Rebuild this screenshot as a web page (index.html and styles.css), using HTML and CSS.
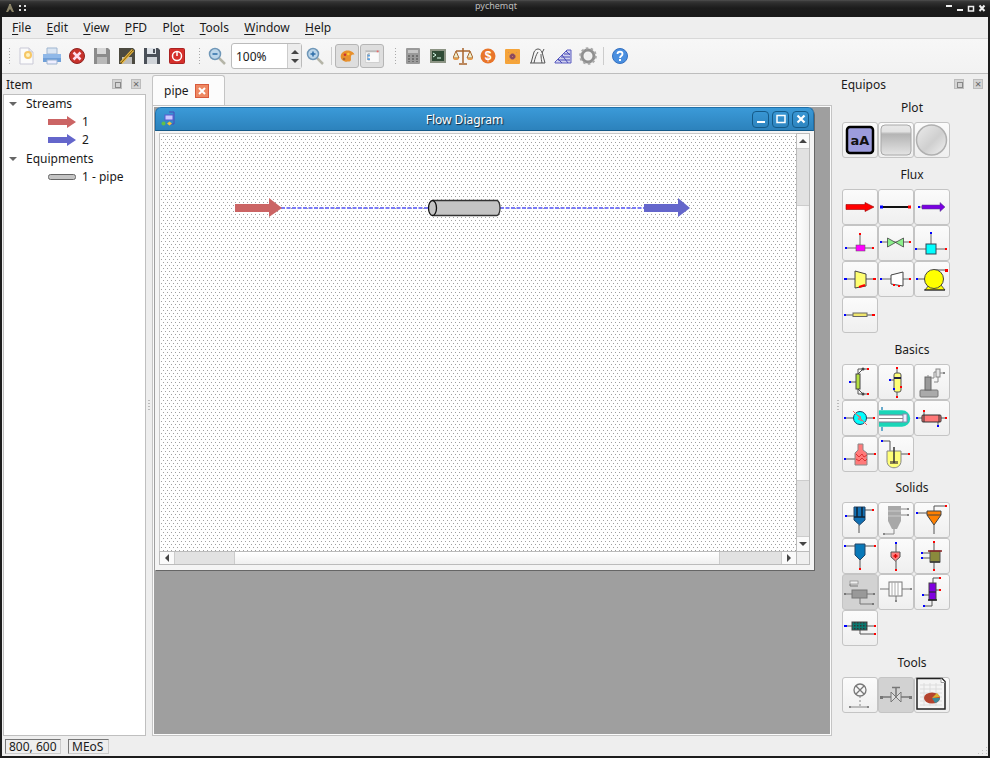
FILE: index.html
```html
<!DOCTYPE html>
<html lang="en">
<head>
<meta charset="utf-8">
<title>pychemqt</title>
<link rel="stylesheet" href="styles.css">
</head>
<body>
<div class="screen">
  <header class="wm-bar">
    <div class="wm-left">
      <svg width="8" height="8" viewBox="0 0 8 8"><path d="M0 8 L3 1 V0 H5 V1 L8 8 H6 L4 5 L2 8Z" fill="#8b8468"/></svg>
      <svg width="7" height="6" viewBox="0 0 7 6"><path d="M0 0h2v2H0zM5 0h2v2H5zM0 4h2v2H0zM5 4h2v2H5z" fill="#ddd"/></svg>
    </div>
    <div class="wm-title">pychemqt</div>
    <div class="wm-right">
      <svg width="40" height="17" viewBox="0 0 40 17"><path d="M0 5h6v2H0zM11 9h6v2h-6z" fill="#eee"/><path d="M22.500 6.500h5v4.500h-5z" fill="none" stroke="#eee" stroke-width="1.500"/><path d="M33.500 5.500l5 5.500M38.500 5.500l-5 5.500" stroke="#eee" stroke-width="2"/></svg>
    </div>
  </header>
  <div class="app">
    <nav class="menubar">
      <span class="menu"><u>F</u>ile</span>
      <span class="menu"><u>E</u>dit</span>
      <span class="menu"><u>V</u>iew</span>
      <span class="menu"><u>P</u>FD</span>
      <span class="menu">Pl<u>o</u>t</span>
      <span class="menu"><u>T</u>ools</span>
      <span class="menu"><u>W</u>indow</span>
      <span class="menu"><u>H</u>elp</span>
    </nav>
    <div class="toolbar">
      <i class="grip"></i>
      <span class="tb"><svg width="20" height="20" viewBox="0 0 20 20"><path d="M3 2h9l4 4v12H3z" fill="#fbfbfb" stroke="#c9c9d6"/><path d="M12 2v4h4" fill="#e4e4ea" stroke="#c9c9d6"/><circle cx="11" cy="9" r="4" fill="#f6c765"/><circle cx="11" cy="9" r="2" fill="#fff3c0"/></svg></span>
      <span class="tb"><svg width="20" height="20" viewBox="0 0 20 20"><path d="M5 2h10v6H5z" fill="#dbe6f3" stroke="#9fb5d0"/><path d="M1 8h18v8H1z" fill="#6f9fd8"/><path d="M1 8h18v4H1z" fill="#8fb8e8"/><path d="M5 14h10v4H5z" fill="#eef" stroke="#9fb5d0"/></svg></span>
      <span class="tb"><svg width="20" height="20" viewBox="0 0 20 20"><circle cx="10" cy="10" r="7.500" fill="#c8322c" stroke="#8e2320"/><path d="M6.500 6.500l7 7M13.500 6.500l-7 7" stroke="#fde" stroke-width="2.500"/></svg></span>
      <span class="tb"><svg width="20" height="20" viewBox="0 0 20 20"><path d="M2 2h14l2 2v14H2z" fill="#8b8b8b"/><path d="M5 2h9v6H5z" fill="#d8d8d8"/><path d="M5 11h10v7H5z" fill="#b9b9b9"/></svg></span>
      <span class="tb"><svg width="20" height="20" viewBox="0 0 20 20"><path d="M2 2h14l2 2v14H2z" fill="#4c4a40"/><path d="M5 11h10v7H5z" fill="#bdbdbd"/><path d="M4 17L16 4" stroke="#e9b73c" stroke-width="3"/><path d="M4 17L16 4" stroke="#7a5a12" stroke-width="1"/></svg></span>
      <span class="tb"><svg width="20" height="20" viewBox="0 0 20 20"><path d="M2 2h14l2 2v14H2z" fill="#4a5058"/><path d="M5 2h9v6H5z" fill="#dfe3e8"/><path d="M5 11h10v7H5z" fill="#cfd3d8"/><path d="M11 3h2v4h-2z" fill="#4a5058"/></svg></span>
      <span class="tb"><svg width="20" height="20" viewBox="0 0 20 20"><rect x="2.500" y="2.500" width="15" height="15" rx="1" fill="#d5302b" stroke="#a22"/><circle cx="10" cy="10" r="4.500" fill="none" stroke="#fff" stroke-width="1.500"/><path d="M10 5v5" stroke="#fff" stroke-width="1.500"/></svg></span>
      <i class="grip grip-b"></i>
      <span class="tb tb-zoom"><svg width="20" height="20" viewBox="0 0 20 20"><path d="M12 12l6 6" stroke="#b5b5a8" stroke-width="2.500"/><circle cx="8" cy="8" r="5.500" fill="#bcd6ea" stroke="#6f97b8" stroke-width="1.500"/><path d="M5.500 8h5" stroke="#2d6ea8" stroke-width="1.500"/></svg></span>
      <div class="spin">
        <span class="spin-val">100%</span>
        <span class="spin-btns"><b class="up"></b><b class="down"></b></span>
      </div>
      <span class="tb tb-zoom"><svg width="20" height="20" viewBox="0 0 20 20"><path d="M12 12l6 6" stroke="#b5b5a8" stroke-width="2.500"/><circle cx="8" cy="8" r="5.500" fill="#bcd6ea" stroke="#6f97b8" stroke-width="1.500"/><path d="M5.500 8h5M8 5.500v5" stroke="#2d6ea8" stroke-width="1.500"/></svg></span>
      <i class="sep"></i>
      <span class="tb tb-on"><svg width="20" height="20" viewBox="0 0 20 20"><path d="M10 3c5 0 8 3 8 5-3-1-4 1-4 3 0 3 1 5-3 5-5 1-9-2-9-6s4-7 8-7z" fill="#e7902d"/><circle cx="7" cy="8" r="1.500" fill="#c33"/><circle cx="6" cy="13" r="1.500" fill="#a63"/><circle cx="11" cy="7" r="1.500" fill="#fc3"/></svg></span>
      <span class="tb tb-on"><svg width="20" height="20" viewBox="0 0 20 20"><rect x="2" y="3" width="16" height="14" fill="#fafafa" stroke="#ccc"/><path d="M2 3h16v2H2z" fill="#bbb"/><path d="M7 7H4.500v7H7" fill="none" stroke="#888"/><path d="M4 8h3v2H4zM4 12h3v2H4z" fill="#5aa0e0"/><rect x="15" y="3" width="2" height="2" fill="#e66"/></svg></span>
      <i class="grip grip-c"></i>
      <span class="tb"><svg width="20" height="20" viewBox="0 0 20 20"><rect x="3" y="2" width="14" height="16" rx="1" fill="#9a9a9a"/><rect x="5" y="4" width="10" height="3" fill="#c6c6c6"/><path d="M5 9h2v2H5zM9 9h2v2H9zM13 9h2v2h-2zM5 12h2v2H5zM9 12h2v2H9zM13 12h2v2h-2zM5 15h2v1H5zM9 15h2v1H9zM13 15h2v1h-2z" fill="#6f6f6f"/></svg></span>
      <span class="tb"><svg width="20" height="20" viewBox="0 0 20 20"><rect x="2" y="3" width="16" height="14" fill="#8c9484"/><rect x="4" y="5" width="12" height="10" fill="#2f4a35"/><path d="M5 7l3 2-3 2" fill="none" stroke="#dfe"/><path d="M9 12h4" stroke="#dfe"/></svg></span>
      <span class="tb"><svg width="20" height="20" viewBox="0 0 20 20"><path d="M10 2v15M6 18h8M3 5h14" stroke="#a8642c" stroke-width="1.500"/><path d="M3 5l-3 7h6zM17 5l-3 7h6z" fill="#eec" stroke="#a8642c"/><path d="M0 12a3 2 0 0 0 6 0zM14 12a3 2 0 0 0 6 0z" fill="#e39a4c"/></svg></span>
      <span class="tb"><svg width="20" height="20" viewBox="0 0 20 20"><circle cx="10" cy="10" r="7.500" fill="#e8752a"/><text x="10" y="14" class="dollar">$</text></svg></span>
      <span class="tb"><svg width="20" height="20" viewBox="0 0 20 20"><rect x="2" y="3" width="15" height="15" rx="1" fill="#f5a43a"/><circle cx="9.500" cy="10.500" r="3" fill="#8d4a5e"/><path d="M5 6l9 9M14 6l-9 9" stroke="#c86" stroke-dasharray="1 2"/></svg></span>
      <span class="tb"><svg width="20" height="20" viewBox="0 0 20 20" fill="none" stroke="#555"><path d="M2 17h15M3 17L6 6c2-4 6-4 8 0l3 11M6 17c1-5 2-8 4-11M14 17c-1-5-1-8-1-9M16 3l-2 4"/></svg></span>
      <span class="tb"><svg width="20" height="20" viewBox="0 0 20 20"><path d="M2 16L14 4h4l0 13H2z" fill="#cfd0ee" stroke="#5a5cc0"/><path d="M5 14h12M8 11h9M11 8h6M13 5l4 4M9 9l6 8M5 13l4 4" stroke="#4a4cb8"/></svg></span>
      <span class="tb"><svg width="20" height="20" viewBox="0 0 20 20"><circle cx="10" cy="10" r="6" fill="none" stroke="#8f8f8f" stroke-width="3"/><circle cx="10" cy="10" r="7.800" fill="none" stroke="#a8a8a8" stroke-width="2" stroke-dasharray="2.500 2.400"/><circle cx="10" cy="10" r="3.500" fill="#efefef"/></svg></span>
      <i class="sep sep-b"></i>
      <span class="tb"><svg width="20" height="20" viewBox="0 0 20 20"><circle cx="10" cy="10" r="7.500" fill="#4a8fe0" stroke="#3470c0"/><path d="M7.500 8c0-3 5-3 5 0 0 2-2.500 2-2.500 4" fill="none" stroke="#fff" stroke-width="1.800"/><path d="M9 13h2v2H9z" fill="#fff"/></svg></span>
    </div>
    <main class="workspace">
      <aside class="dock dock-left">
        <div class="dock-head">
          <span>Item</span>
          <span class="dock-btns"><i class="dbtn dbtn-float"></i><i class="dbtn dbtn-close"></i></span>
        </div>
        <div class="tree">
          <div class="tree-row"><b class="caret"></b>Streams</div>
          <div class="tree-row leaf"><svg width="28" height="12" viewBox="0 0 28 12"><path d="M0 3h19V0l9 6-9 6V9H0z" fill="#cb6464"/></svg>1</div>
          <div class="tree-row leaf"><svg width="28" height="12" viewBox="0 0 28 12"><path d="M0 3h19V0l9 6-9 6V9H0z" fill="#6466cb"/></svg>2</div>
          <div class="tree-row"><b class="caret"></b>Equipments</div>
          <div class="tree-row leaf"><svg width="28" height="12" viewBox="0 0 28 12"><rect x="0.500" y="3.500" width="27" height="5" rx="2" fill="#c4c4c4" stroke="#666"/></svg>1 - pipe</div>
        </div>
      </aside>
      <i class="splitter"></i>
      <section class="center">
        <div class="tabs"><div class="tab">pipe<span class="tab-x"><svg width="10" height="10" viewBox="0 0 10 10"><path d="M2 2l6 6M8 2l-6 6" stroke="#fff" stroke-width="2"/></svg></span></div></div>
        <div class="pane">
          <div class="mdi">
            <article class="subwin">
              <div class="subwin-title">
                <svg class="subwin-icon" width="16" height="16" viewBox="0 0 16 16"><path d="M8 1h5v12H8" fill="none" stroke="#4a4ab8"/><rect x="4" y="4" width="8" height="5" fill="#c9c9ff" stroke="#5a5ad0"/><circle cx="2.500" cy="12.500" r="2" fill="#5fc04a"/><path d="M6 12.500l2.500-2 2.500 2-2.500 2z" fill="#f4c33c"/></svg>
                <span class="subwin-name">Flow Diagram</span>
                <span class="subwin-btns">
                  <span class="wbtn"><svg width="12" height="12" viewBox="0 0 12 12"><path d="M2 8h8v2H2z" fill="#fff"/></svg></span>
                  <span class="wbtn"><svg width="12" height="12" viewBox="0 0 12 12"><path d="M2 2.500h8v7H2z" fill="none" stroke="#fff" stroke-width="1.500"/></svg></span>
                  <span class="wbtn"><svg width="12" height="12" viewBox="0 0 12 12"><path d="M2.500 2.500l7 7M9.500 2.500l-7 7" stroke="#fff" stroke-width="2.200"/></svg></span>
                </span>
              </div>
              <div class="subwin-body">
                <div class="view">
                  <svg class="canvas" width="637" height="418" viewBox="0 0 637 418">
                    <defs><pattern id="dots" width="4" height="6" patternUnits="userSpaceOnUse"><rect x="2" y="0" width="1" height="1" fill="#a0a0a0"/><rect x="0" y="3" width="1" height="1" fill="#a0a0a0"/></pattern></defs>
                    <rect width="637" height="418" fill="#fff"/>
                    <rect width="637" height="418" fill="url(#dots)"/>
                    <path d="M0 0V418M0 0H637" stroke="#c8c8c8" stroke-width="2"/>
                    <path d="M122 75H270M341 75H486" stroke="#7a7af5" stroke-width="2" stroke-dasharray="4 1.500"/>
                    <path d="M76 71H110V65L123 75 110 84V79H76z" fill="#cb6464"/>
                    <path d="M485 71H519V65L531 75 519 84V79H485z" fill="#6466cb"/>
                    <path d="M274 67.500H338a3 7.500 0 0 1 0 15H274z" fill="#c4c4c4" stroke="#333" stroke-width="1.300"/>
                    <ellipse cx="273.500" cy="75" rx="4" ry="7.500" fill="#c4c4c4" stroke="#111" stroke-width="1.300"/>
                  </svg>
                  <div class="vbar">
                    <span class="sb-btn"><b class="up"></b></span>
                    <span class="vtrack-a"></span>
                    <span class="vthumb"></span>
                    <span class="vtrack-b"></span>
                    <span class="sb-btn"><b class="down"></b></span>
                  </div>
                  <div class="hbar">
                    <span class="sb-btn"><b class="left"></b></span>
                    <span class="htrack-a"></span>
                    <span class="hthumb"></span>
                    <span class="htrack-b"></span>
                    <span class="sb-btn"><b class="right"></b></span>
                  </div>
                  <span class="corner"></span>
                </div>
              </div>
            </article>
          </div>
        </div>
      </section>
      <i class="splitter splitter-r"></i>
      <aside class="dock dock-right">
        <div class="dock-head">
          <span>Equipos</span>
          <span class="dock-btns"><i class="dbtn dbtn-float"></i><i class="dbtn dbtn-close"></i></span>
        </div>
        <h4 class="grp grp-first">Plot</h4>
        <div class="eq-grid">
          <span class="eq"><svg width="36" height="36" viewBox="0 0 36 36"><rect x="5" y="5" width="26" height="26" rx="3" fill="#9c9cdc" stroke="#000" stroke-width="2.500"/><text x="18" y="23" class="aa">aA</text></svg></span>
          <span class="eq"><svg width="36" height="36" viewBox="0 0 36 36"><defs><linearGradient id="gb" x1="0" y1="0" x2="0" y2="1"><stop offset="0" stop-color="#e8e8e8"/><stop offset=".22" stop-color="#e2e2e2"/><stop offset=".3" stop-color="#b4b4b4"/><stop offset="1" stop-color="#e4e4e4"/></linearGradient></defs><rect x="3" y="3" width="30" height="30" rx="4" fill="url(#gb)" stroke="#a8a8a8"/></svg></span>
          <span class="eq"><svg width="36" height="36" viewBox="0 0 36 36"><defs><linearGradient id="gc" x1="0" y1="0" x2="1" y2="1"><stop offset="0" stop-color="#ececec"/><stop offset=".55" stop-color="#cfcfcf"/><stop offset="1" stop-color="#f2f2f2"/></linearGradient></defs><circle cx="17.500" cy="18" r="15" fill="url(#gc)" stroke="#b0b0b0" stroke-width="1.500"/></svg></span>
        </div>
        <h4 class="grp">Flux</h4>
        <div class="eq-grid">
          <span class="eq"><svg width="36" height="36" viewBox="0 0 36 36"><path d="M4 15.500H23V13.500L32 18 23 22.500V20.500H4z" fill="#f00" stroke="#900" stroke-width=".6"/></svg></span>
          <span class="eq"><svg width="36" height="36" viewBox="0 0 36 36"><path d="M3 18h30" stroke="#111" stroke-width="2"/><rect x="2" y="16.500" width="3" height="3" fill="#00f"/><rect x="30" y="16.500" width="3" height="3" fill="#f00"/></svg></span>
          <span class="eq"><svg width="36" height="36" viewBox="0 0 36 36"><path d="M8 16H26V13.500L31 18 26 22.500V20H8z" fill="#7a00e0" stroke="#504080" stroke-width=".5"/><rect x="4" y="17" width="2" height="2" fill="#00f"/><path d="M6 18h2" stroke="#666"/></svg></span>
          <span class="eq"><svg width="36" height="36" viewBox="0 0 36 36"><path d="M4 23h27M18 9v11" stroke="#666"/><rect x="14" y="20" width="9" height="6" fill="#f0f" stroke="#555" stroke-width=".5"/><rect x="3" y="22" width="2" height="2" fill="#00f"/><rect x="30" y="22" width="2" height="2" fill="#f00"/><rect x="17" y="8" width="2" height="2" fill="#f00"/></svg></span>
          <span class="eq"><svg width="36" height="36" viewBox="0 0 36 36"><path d="M3 17h29" stroke="#666"/><path d="M9.500 13l16 9V13L9.500 22z" fill="#8cf08c" stroke="#444" stroke-width=".8"/><rect x="2" y="16" width="2" height="2" fill="#00f"/><rect x="31" y="16" width="2" height="2" fill="#f00"/></svg></span>
          <span class="eq"><svg width="36" height="36" viewBox="0 0 36 36"><path d="M2 24h30M17 9v10" stroke="#666"/><rect x="12" y="19" width="10" height="10" fill="#0ff" stroke="#345"/><rect x="1" y="23" width="2" height="2" fill="#00f"/><rect x="31" y="23" width="2" height="2" fill="#f00"/><rect x="16" y="7" width="2" height="2" fill="#00f"/></svg></span>
          <span class="eq"><svg width="36" height="36" viewBox="0 0 36 36"><path d="M3 18h30" stroke="#555"/><path d="M13 10l11 3v12l-11 2z" fill="#ffff70" stroke="#444"/><rect x="2" y="17" width="3" height="2" fill="#00f"/><rect x="31" y="17" width="3" height="2" fill="#f00"/><path d="M17 26l6-2" stroke="#f00" stroke-width="2"/></svg></span>
          <span class="eq"><svg width="36" height="36" viewBox="0 0 36 36"><path d="M3 18h30" stroke="#666"/><path d="M13 14l12-3v14l-12-2z" fill="#fff" stroke="#444"/><rect x="2" y="17" width="2" height="2" fill="#00f"/><rect x="31" y="17" width="2" height="2" fill="#f00"/><rect x="15" y="23" width="2" height="2" fill="#f00"/><rect x="20" y="24" width="2" height="2" fill="#f00"/></svg></span>
          <span class="eq"><svg width="36" height="36" viewBox="0 0 36 36"><path d="M3 18h8M20 9h12" stroke="#555"/><path d="M11 29h20l-4-5H15z" fill="#ff0" stroke="#333" stroke-width=".8"/><circle cx="20" cy="18" r="9.500" fill="#ff0" stroke="#444"/><path d="M10 29h21" stroke="#222"/><rect x="2" y="17" width="2" height="2" fill="#00f"/><rect x="31" y="8" width="3" height="3" fill="#f00"/></svg></span>
          <span class="eq"><svg width="36" height="36" viewBox="0 0 36 36"><path d="M3 18h30" stroke="#555"/><rect x="11" y="16" width="14" height="3.500" fill="#f0e66c" stroke="#666"/><rect x="2" y="17" width="2" height="2" fill="#00f"/><rect x="30" y="17" width="3" height="2" fill="#f00"/></svg></span>
        </div>
        <h4 class="grp">Basics</h4>
        <div class="eq-grid">
          <span class="eq"><svg width="36" height="36" viewBox="0 0 36 36"><path d="M8 18h6M16 10V5h10M16 25v5h10M21 5l-5 5M21 30l-5-5" fill="none" stroke="#555"/><rect x="14" y="10" width="4" height="15" fill="#b4e040" stroke="#444"/><circle cx="21" cy="5" r="1.500" fill="#444"/><circle cx="21" cy="30" r="1.500" fill="#444"/><rect x="7" y="17" width="2" height="2" fill="#00f"/><rect x="25" y="4" width="2" height="2" fill="#f00"/><rect x="25" y="29" width="2" height="2" fill="#f00"/></svg></span>
          <span class="eq"><svg width="36" height="36" viewBox="0 0 36 36"><path d="M19 4v29M12 16h4" stroke="#555"/><rect x="16" y="9" width="7" height="19" rx="2" fill="#ffff78" stroke="#555"/><path d="M16 14h7" stroke="#224" stroke-width="2"/><rect x="11" y="15" width="2" height="2" fill="#00f"/><rect x="15" y="24" width="2" height="2" fill="#00f"/><rect x="22" y="22" width="2" height="2" fill="#f00"/><rect x="18" y="3" width="2" height="2" fill="#f00"/><rect x="18" y="32" width="2" height="2" fill="#f00"/></svg></span>
          <span class="eq"><svg width="36" height="36" viewBox="0 0 36 36"><rect x="6" y="26" width="18" height="7" rx="1" fill="#aaa" stroke="#777"/><rect x="11" y="13" width="6" height="13" fill="#999" stroke="#666"/><path d="M17 14h3V8h3M24 13v5h-4M14 13v-2" fill="none" stroke="#888"/><rect x="22" y="5" width="4" height="8" fill="#e4e4e4" stroke="#888"/><rect x="29" y="8" width="2" height="2" fill="#888"/><path d="M26 9h3" stroke="#888"/></svg></span>
          <span class="eq"><svg width="36" height="36" viewBox="0 0 36 36"><path d="M3 18h29" stroke="#555"/><circle cx="18" cy="18" r="6.500" fill="#0ff" stroke="#246"/><path d="M11 11l14 14M15 15l4 2-3 2 4 2" stroke="#e66" fill="none"/><rect x="2" y="17" width="2" height="2" fill="#00f"/><rect x="31" y="17" width="2" height="2" fill="#f00"/></svg></span>
          <span class="eq"><svg width="36" height="36" viewBox="0 0 36 36" class="eq-over"><path d="M1 12.500H24a6 6 0 0 1 0 12H1" fill="#fff" stroke="#1ad6b8" stroke-width="4.500"/><path d="M1 15H24a3.500 3.500 0 0 1 0 7H1" fill="#fff" stroke="#557" stroke-width=".8"/><rect x="25" y="14" width="4" height="8" fill="#eef" stroke="#88a"/><path d="M1 18.500H25" stroke="#888"/><path d="M4 7v3M4 27v4" stroke="#6ac" stroke-width="2"/></svg></span>
          <span class="eq"><svg width="36" height="36" viewBox="0 0 36 36"><path d="M3 18h29M10 12v4M24 22v3" stroke="#555"/><rect x="8" y="15" width="19" height="7" rx="1" fill="#ff7878" stroke="#333"/><path d="M10 15v7M25 15v7" stroke="#333"/><rect x="2" y="17" width="2" height="2" fill="#00f"/><rect x="31" y="17" width="2" height="2" fill="#f00"/><rect x="9" y="10" width="2" height="2" fill="#f00"/><rect x="23" y="25" width="2" height="2" fill="#00f"/></svg></span>
          <span class="eq"><svg width="36" height="36" viewBox="0 0 36 36"><path d="M3 23h10M25 18h7" stroke="#555"/><path d="M13 29V17l3-3V8h5v6l4 3v12z" fill="#ff7a7a" stroke="#888"/><path d="M14 18l3 3 3-3 2 3 3-2M14 23l3 2 3-3 3 3 2-2" stroke="#d33" fill="none"/><rect x="2" y="22" width="2" height="2" fill="#00f"/><rect x="32" y="17" width="2" height="2" fill="#f00"/></svg></span>
          <span class="eq"><svg width="36" height="36" viewBox="0 0 36 36"><path d="M4 5h8v10M23 18h8" fill="none" stroke="#555"/><path d="M9 15h14v10c0 9-14 9-14 0z" fill="#ffff78" stroke="#888"/><rect x="12" y="25" width="8" height="3" fill="#8a8050"/><path d="M16 11v16" stroke="#333" stroke-width="1.500"/><rect x="3" y="4" width="2" height="2" fill="#00f"/><rect x="30" y="17" width="2" height="2" fill="#f00"/></svg></span>
        </div>
        <h4 class="grp grp-tight">Solids</h4>
        <div class="eq-grid">
          <span class="eq"><svg width="36" height="36" viewBox="0 0 36 36"><path d="M4 14h8M23 8h8M17 23v8" stroke="#555"/><path d="M12 5h11v13l-5.500 5-5.500-5z" fill="#1070b4" stroke="#246"/><path d="M15 5v10M20 5v10M12 15h11" stroke="#123" stroke-width="1.500"/><rect x="3" y="13" width="2" height="2" fill="#00f"/><rect x="30" y="7" width="2" height="2" fill="#f00"/></svg></span>
          <span class="eq"><svg width="36" height="36" viewBox="0 0 36 36"><path d="M23 7h7M23 13h7M16 27v5H6" fill="none" stroke="#888"/><path d="M10 4h13v15l-4 8h-5l-4-8z" fill="#a8a8a8"/><path d="M10 9h13M10 14h13" stroke="#ccc"/><rect x="29" y="6" width="2" height="2" fill="#888"/><rect x="29" y="12" width="2" height="2" fill="#888"/><rect x="5" y="31" width="2" height="2" fill="#888"/></svg></span>
          <span class="eq"><svg width="36" height="36" viewBox="0 0 36 36"><path d="M3 11h10M20 9V4h12M20 23v9" fill="none" stroke="#555"/><path d="M13 9h14v4l-7 10-7-10z" fill="#ff8000" stroke="#444"/><path d="M13 13h14" stroke="#444"/><rect x="2" y="10" width="2" height="2" fill="#00f"/><rect x="31" y="3" width="2" height="2" fill="#f00"/></svg></span>
          <span class="eq"><svg width="36" height="36" viewBox="0 0 36 36"><path d="M3 8h10M23 8h10M18 22v9" stroke="#555"/><path d="M13 6h10v11l-5 5-5-5z" fill="#0878b8" stroke="#246"/><rect x="2" y="7" width="2" height="2" fill="#00f"/><rect x="32" y="7" width="2" height="2" fill="#f00"/><rect x="17" y="30" width="2" height="2" fill="#f00"/></svg></span>
          <span class="eq"><svg width="36" height="36" viewBox="0 0 36 36"><path d="M18 5v9M18 23v9" stroke="#555"/><path d="M13 14h9v5l-4.500 4-4.500-4z" fill="#ff8080" stroke="#555"/><path d="M15.500 18h4M17.500 16v4" stroke="#d00" stroke-width="1.500"/><rect x="17" y="4" width="2" height="2" fill="#00f"/><rect x="17" y="31" width="2" height="2" fill="#f00"/></svg></span>
          <span class="eq"><svg width="36" height="36" viewBox="0 0 36 36"><path d="M8 15h8M8 20h8M20 4v9M20 24v8" stroke="#555"/><rect x="16" y="13" width="10" height="11" fill="#8a8a3c" stroke="#555"/><path d="M14 13h14" stroke="#822" stroke-width="1.500"/><path d="M16 24h10" stroke="#333" stroke-width="1.500"/><rect x="7" y="14" width="2" height="2" fill="#00f"/><rect x="7" y="19" width="2" height="2" fill="#00f"/><rect x="19" y="3" width="2" height="2" fill="#f00"/><rect x="19" y="31" width="2" height="2" fill="#f00"/></svg></span>
          <span class="eq eq-off"><svg width="36" height="36" viewBox="0 0 36 36"><rect x="8" y="7" width="8" height="3" fill="#eee" stroke="#888" stroke-width=".7"/><path d="M3 20h30M8 10v2h8M18 24v6h13" fill="none" stroke="#777"/><rect x="10" y="16" width="15" height="8" fill="#999" stroke="#777"/><rect x="2" y="19" width="2" height="2" fill="#777"/><rect x="31" y="19" width="2" height="2" fill="#777"/><rect x="30" y="29" width="2" height="2" fill="#777"/></svg></span>
          <span class="eq"><svg width="36" height="36" viewBox="0 0 36 36"><path d="M2 15h31M18 22v5" stroke="#777"/><rect x="11" y="8" width="13" height="14" fill="#fff" stroke="#777"/><path d="M14 8v14M17 8v14M20 8v14" stroke="#aaa"/><rect x="32" y="14" width="2" height="2" fill="#888"/><rect x="17" y="26" width="2" height="2" fill="#888"/></svg></span>
          <span class="eq"><svg width="36" height="36" viewBox="0 0 36 36"><path d="M22 16h4M19 9V4h7M9 21h6M18 26v6H10" fill="none" stroke="#555"/><rect x="15" y="9" width="7" height="17" fill="#8000e0" stroke="#444"/><path d="M15 18h7" stroke="#222"/><path d="M14 26h9" stroke="#222" stroke-width="1.500"/><rect x="8" y="20" width="2" height="2" fill="#00f"/><rect x="25" y="15" width="2" height="2" fill="#f00"/><rect x="25" y="3" width="2" height="2" fill="#f00"/><rect x="9" y="31" width="2" height="2" fill="#00f"/></svg></span>
          <span class="eq"><svg width="36" height="36" viewBox="0 0 36 36"><defs><pattern id="mesh" width="3" height="3" patternUnits="userSpaceOnUse"><rect width="3" height="3" fill="#0a7870"/><rect width="1.500" height="1.500" fill="#333"/></pattern></defs><path d="M3 16h30M18 20v4h15" fill="none" stroke="#555"/><rect x="10" y="12" width="15" height="8" fill="url(#mesh)" stroke="#444"/><rect x="2" y="15" width="3" height="2" fill="#00f"/><rect x="32" y="15" width="2" height="2" fill="#f00"/><rect x="32" y="23" width="2" height="2" fill="#f00"/></svg></span>
        </div>
        <h4 class="grp">Tools</h4>
        <div class="eq-grid">
          <span class="eq"><svg width="36" height="36" viewBox="0 0 36 36" fill="none"><circle cx="18" cy="13" r="6" stroke="#777" stroke-width="1.300"/><path d="M14 9l8 8M22 9l-8 8" stroke="#777" stroke-width="1.300"/><path d="M18 19v11" stroke="#888" stroke-dasharray="2 2"/><path d="M8 30h18" stroke="#888"/><rect x="7" y="29" width="2" height="2" fill="#888"/><rect x="25" y="29" width="2" height="2" fill="#888"/></svg></span>
          <span class="eq eq-off"><svg width="36" height="36" viewBox="0 0 36 36" fill="none"><path d="M4 20h9M23 20h9M18 20v-9M14 10.500h8" stroke="#777" stroke-width="1.500"/><path d="M13 15l10 10V15L13 25z" stroke="#777" fill="#ddd"/><rect x="2" y="19" width="3" height="3" fill="#777"/><rect x="31" y="19" width="3" height="3" fill="#777"/></svg></span>
          <span class="eq"><svg width="36" height="36" viewBox="0 0 36 36"><path d="M3 1.500h25l3 3v27.500H3z" fill="#f4f4f4" stroke="#222" stroke-width="1.500"/><path d="M27 1.500v4h4" fill="#fff" stroke="#999"/><path d="M6 8h22M6 12h22M6 16h22M6 20h22M6 24h22M6 28h22M10 6v23M16 6v23M22 6v23" stroke="#dcdcdc"/><ellipse cx="18" cy="21" rx="8" ry="5.500" fill="#b4432e"/><path d="M18 21l5-5 3 4z" fill="#d8b030"/><path d="M18 21h8c0 2-3 5-5 5z" fill="#3a8a9a"/></svg></span>
        </div>
      </aside>
    </main>
    <footer class="status">
      <span class="st st-a">800, 600</span>
      <span class="st st-b">MEoS</span>
      <svg class="size-grip" width="10" height="7" viewBox="0 0 10 7"><path d="M8 0h1v1H8zM4 3h1v1H4zM8 3h1v1H8zM0 6h1v1H0zM4 6h1v1H4zM8 6h1v1H8z" fill="#c0c0c0"/></svg>
    </footer>
  </div>
</div>
</body>
</html>
```

FILE: styles.css
```css
* { box-sizing: border-box; }
html, body { margin: 0; padding: 0; }
body { font-family: "Noto Sans", "Open Sans", sans-serif; font-size: 12px; color: #1a1a1a; background: #1c1c1c; }
.screen { width: 990px; height: 758px; display: flex; flex-direction: column; overflow: hidden; background: #1c1c1c; }
i, b { display: block; }

/* window manager title */
.wm-bar { height: 17px; flex: none; display: flex; align-items: center; background: linear-gradient(#555 0, #3a3a3a 1px, #2e2e2e 3px, #1c1c1c 8px, #1a1a1a 100%); padding: 0 4px 0 6px; }
.wm-left { flex: 1; display: flex; gap: 5px; align-items: center; margin-top: -1px; }
.wm-title { font-size: 9px; color: #bdbdbd; line-height: 12px; margin-top: -5px; }
.wm-right { flex: 1; display: flex; justify-content: flex-end; }

.app { flex: 1; min-height: 0; margin: 0 2px 2px; display: flex; flex-direction: column; background: #eeeeee; }

/* menu */
.menubar { height: 22px; flex: none; display: flex; align-items: center; padding-left: 10px; gap: 15.300px; background: #eeeeee; font-size: 12px; border-bottom: 1px solid #d8d8d8; }
.menu u { text-underline-offset: 2px; text-decoration-thickness: 1px; }

/* toolbar */
.toolbar { height: 35px; flex: none; display: flex; align-items: center; padding-left: 6px; background: linear-gradient(#f7f7f7, #f2f2f2); border-bottom: 1px solid #bdbdbd; }
.tb { width: 25px; height: 27px; display: flex; align-items: center; justify-content: center; flex: none; }
.tb-zoom { width: 24px; }
.tb-on { width: 24px; height: 24px; margin-right: 1px; border: 1px solid #b5b5b5; border-radius: 3px; background: #dedede; }
.tb-on svg { width: 17px; height: 17px; }
.grip { width: 3px; height: 18px; margin: 0 3px 0 0; flex: none; background-image: radial-gradient(circle, #aaa 0.7px, transparent 1px); background-size: 3px 3px; }
.grip-b { margin: 0 4px 0 9px; }
.grip-c { margin: 0 3px 0 9px; }
.sep { width: 1px; height: 18px; background: #ccc; margin: 0 3px 0 4px; flex: none; }
.sep-b { margin: 0 3px 0 3px; }

.spin { width: 71px; height: 26px; flex: none; display: flex; border: 1px solid #bbb; border-radius: 3px; background: #fff; margin: 0 1px 0 2px; }
.spin-val { flex: 1; padding-left: 4px; line-height: 25px; font-size: 12px; }
.spin-btns { width: 14px; border-left: 1px solid #ccc; background: #ececec; display: flex; flex-direction: column; align-items: center; justify-content: center; gap: 5px; }

.up { width: 0; height: 0; border: 4px solid transparent; border-top: 0; border-bottom: 4px solid #444; }
.down { width: 0; height: 0; border: 4px solid transparent; border-bottom: 0; border-top: 4px solid #444; }
.left { width: 0; height: 0; border: 4px solid transparent; border-left: 0; border-right: 4px solid #444; }
.right { width: 0; height: 0; border: 4px solid transparent; border-right: 0; border-left: 4px solid #444; }

.dollar { font: bold 12px "Liberation Sans", sans-serif; fill: #fff; text-anchor: middle; }
.aa { font: bold 13px "DejaVu Sans", sans-serif; fill: #111; text-anchor: middle; }

/* workspace */
.workspace { flex: 1; min-height: 0; display: flex; background: #eeeeee; }
.dock { flex: none; display: flex; flex-direction: column; }
.dock-left { width: 144px; padding-left: 1px; }
.dock-right { width: 146px; }
.dock-head { height: 20px; flex: none; display: flex; align-items: center; justify-content: space-between; font-size: 12px; padding: 0 5px 0 3px; }
.dock-right .dock-head { padding-left: 0; margin-left: -1px; }
.dock-btns { display: flex; gap: 9px; }
.dbtn { width: 10px; height: 10px; background: #d4d4d4; border: 1px solid #bcbcbc; position: relative; }
.dbtn-float::after { content: ""; position: absolute; left: 2px; top: 2px; width: 4px; height: 4px; border: 1px solid #888; }
.dbtn-close::after { content: "\00d7"; position: absolute; left: 0; top: -2px; width: 8px; text-align: center; font-size: 11px; line-height: 12px; color: #666; }
.tree { flex: 1; background: #fff; border: 1px solid #bfbfbf; margin-bottom: 2px; }
.tree-row { height: 18.400px; display: flex; align-items: center; font-size: 12px; padding: 0 0 2px 22px; position: relative; }
.leaf { padding-left: 44px; gap: 6px; }
.caret { position: absolute; left: 5px; top: 7px; width: 0; height: 0; border: 4px solid transparent; border-bottom: 0; border-top: 4px solid #666; }
.splitter { width: 6px; flex: none; background: repeating-linear-gradient(#bbb 0 1px, transparent 1px 3px) center / 2px 12px no-repeat; }
.splitter-r { width: 8px; }

.center { width: 682px; flex: none; display: flex; flex-direction: column; }
.tabs { height: 31px; flex: none; display: flex; align-items: flex-end; padding-top: 1px; }
.tab { width: 73px; height: 30px; background: #fcfcfc; border: 1px solid #c4c4c4; border-bottom: 0; border-radius: 3px 3px 0 0; display: flex; align-items: center; font-size: 12px; padding-left: 11px; gap: 6px; }
.tab-x { width: 14px; height: 14px; background: #ee8862; border: 1px solid #d85a3c; display: flex; align-items: center; justify-content: center; }
.pane { flex: 1; min-height: 0; border: 1px solid #c4c4c4; background: #fbfbfb; padding: 1px; margin: 0 2px 2px 0; }
.mdi { height: 100%; background: #9f9f9f; position: relative; }

/* sub window */
.subwin { position: absolute; left: 1px; top: 0; width: 659px; height: 463px; display: flex; flex-direction: column; background: #f4f4f4; border-radius: 7px 7px 0 0; box-shadow: 1px 1px 0 #666; }
.subwin-title { height: 24px; flex: none; display: flex; align-items: center; background: linear-gradient(#3b9ad8, #2c82bc); border-radius: 6px 6px 0 0; border: 1px solid #1f6fa8; border-bottom-color: #155a88; padding: 0 4px 0 5px; }
.subwin-name { flex: 1; text-align: center; color: #fff; font-size: 12px; text-shadow: 1px 1px 1px #123; }
.subwin-btns { display: flex; gap: 3px; }
.wbtn { width: 17px; height: 17px; border: 1px solid #155a88; border-radius: 4px; display: flex; align-items: center; justify-content: center; }
.subwin-body { flex: 1; min-height: 0; padding: 2px 4px 5px 4px; }
.view { display: grid; grid-template-columns: 637px 14px; grid-template-rows: 418px 14px; }
.canvas { display: block; }
.vbar { display: flex; flex-direction: column; background: #fff; border: 1px solid #bbb; border-bottom: 0; }
.hbar { display: flex; background: #fff; border: 1px solid #bbb; border-right: 0; }
.sb-btn { width: 14px; height: 14px; flex: none; display: flex; align-items: center; justify-content: center; background: #fafafa; }
.vbar .sb-btn { width: 100%; }
.hbar .sb-btn { height: 100%; }
.vtrack-a { height: 58px; flex: none; background: #e2e2e2; border-top: 1px solid #ccc; border-bottom: 1px solid #ccc; }
.vthumb { height: 274px; flex: none; background: linear-gradient(90deg, #fff, #f0f0f0); }
.vtrack-b { flex: 1; background: #e2e2e2; border-top: 1px solid #ccc; border-bottom: 1px solid #ccc; }
.htrack-a { width: 61px; flex: none; background: #e2e2e2; border-left: 1px solid #ccc; border-right: 1px solid #ccc; }
.hthumb { width: 484px; flex: none; background: linear-gradient(#fff, #f0f0f0); }
.htrack-b { flex: 1; background: #e2e2e2; border-left: 1px solid #ccc; border-right: 1px solid #ccc; }
.corner { background: #efefef; border: 1px solid #bbb; }

/* equipment dock */
.grp { margin: 0; font-weight: 400; font-size: 12px; text-align: center; width: 140px; height: 31px; padding-top: 8px; line-height: 18px; }
.grp-first { height: 28px; padding-top: 5px; }
.grp-tight { height: 30px; padding-top: 7px; }
.eq-grid { display: grid; grid-template-columns: repeat(3, 36px); grid-auto-rows: 36px; width: 108px; }
.eq { width: 36px; height: 36px; border: 1px solid #c4c4c4; border-radius: 3px; background: linear-gradient(#fbfbfb, #efefef); display: flex; align-items: center; justify-content: center; }
.eq svg { flex: none; margin: -1px; overflow: visible; position: relative; }
.eq-off { background: #d2d2d2; }

/* status bar */
.status { height: 18px; flex: none; display: flex; gap: 7px; padding: 1px 0 0 3px; background: #eeeeee; position: relative; }
.st { height: 15px; border: 1px solid; border-color: #777 #ccc #ccc #777; padding: 0 0 0 3px; font-size: 12px; line-height: 13px; white-space: nowrap; }
.st-a { width: 56px; }
.st-b { width: 41px; }
.size-grip { margin: 8px 0 0 auto; }
```
